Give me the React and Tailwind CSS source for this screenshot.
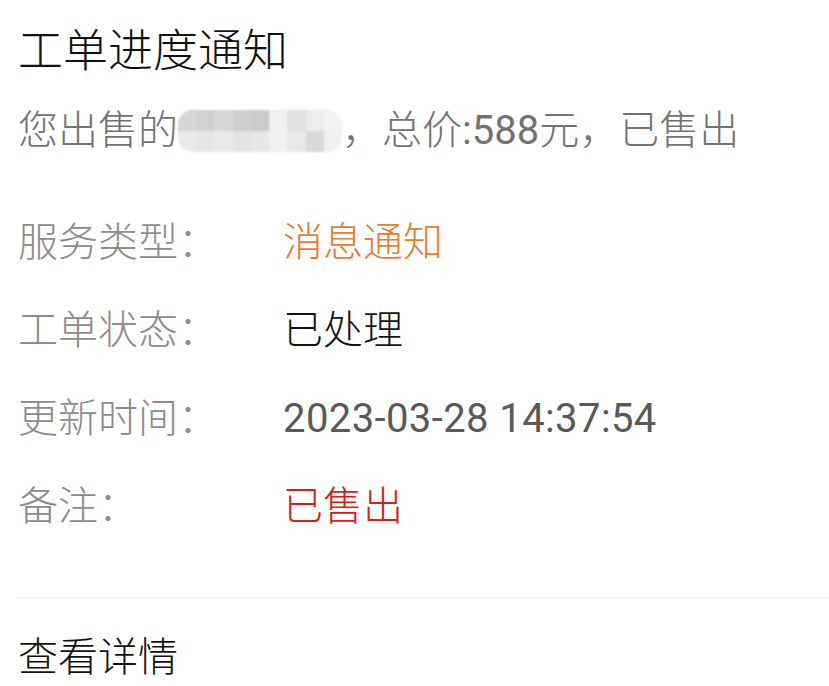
import React from "react";

const top = ["#d6d6d6", "#d0d0d0", "#d8d8d8", "#cfcfcf", "#cbcbcb", "#efefef", "#e0e0e0", "#ececec", "#f2f2f2"];
const bottom = ["#e9e9e9", "#e6e6e6", "#e9e9e9", "#e4e4e4", "#e7e7e7", "#f0f0f0", "#e8e8e8", "#d9d9d9", "#f0f0f0"];

function Blur() {
  return (
    <span className="inline-flex flex-col w-[164px] h-[42px] rounded-[14px] overflow-hidden align-middle blur-[1px]">
      <span className="flex h-[21px]">
        {top.map((c, i) => (
          <span key={i} className="flex-1 h-full" style={{ background: c }} />
        ))}
      </span>
      <span className="flex h-[21px]">
        {bottom.map((c, i) => (
          <span key={i} className="flex-1 h-full" style={{ background: c }} />
        ))}
      </span>
    </span>
  );
}

function Row({ label, children, cls }) {
  return (
    <div className="flex items-center h-[88px]">
      <div className="w-[265px] text-[#8c8c8c]">{label}</div>
      <div className={cls}>{children}</div>
    </div>
  );
}

export default function App() {
  return (
    <div
      className="w-[829px] h-[686px] bg-white overflow-hidden pl-[18px] pt-[29px] text-[40px] leading-[46px] font-light"
      style={{ fontFamily: 'Roboto, "Noto Sans CJK SC", sans-serif' }}
    >
      <div className="h-[46px] text-[45px] leading-[46px] text-[#111111]">工单进度通知</div>
      <div className="mt-[33px] h-[46px] flex items-center text-[#727272] whitespace-nowrap">
        <span>您出售的</span>
        <Blur />
        <span>
          ，总价<span className="font-normal">:588</span>元，已售出
        </span>
      </div>
      <div className="mt-[45px]">
        <Row label="服务类型：" cls="text-[#e67e2e]">消息通知</Row>
        <Row label="工单状态：" cls="text-[#141414]">已处理</Row>
        <Row label="更新时间：" cls="text-[#595959] tracking-[0.4px] font-normal">2023-03-28 14:37:54</Row>
        <Row label="备注：" cls="text-[#d8201b]">已售出</Row>
      </div>
      <div className="mt-[46px] -ml-[2px] h-px bg-[#eeeeee]" />
      <div className="mt-[37px] h-[46px] text-[#111111]">查看详情</div>
    </div>
  );
}
